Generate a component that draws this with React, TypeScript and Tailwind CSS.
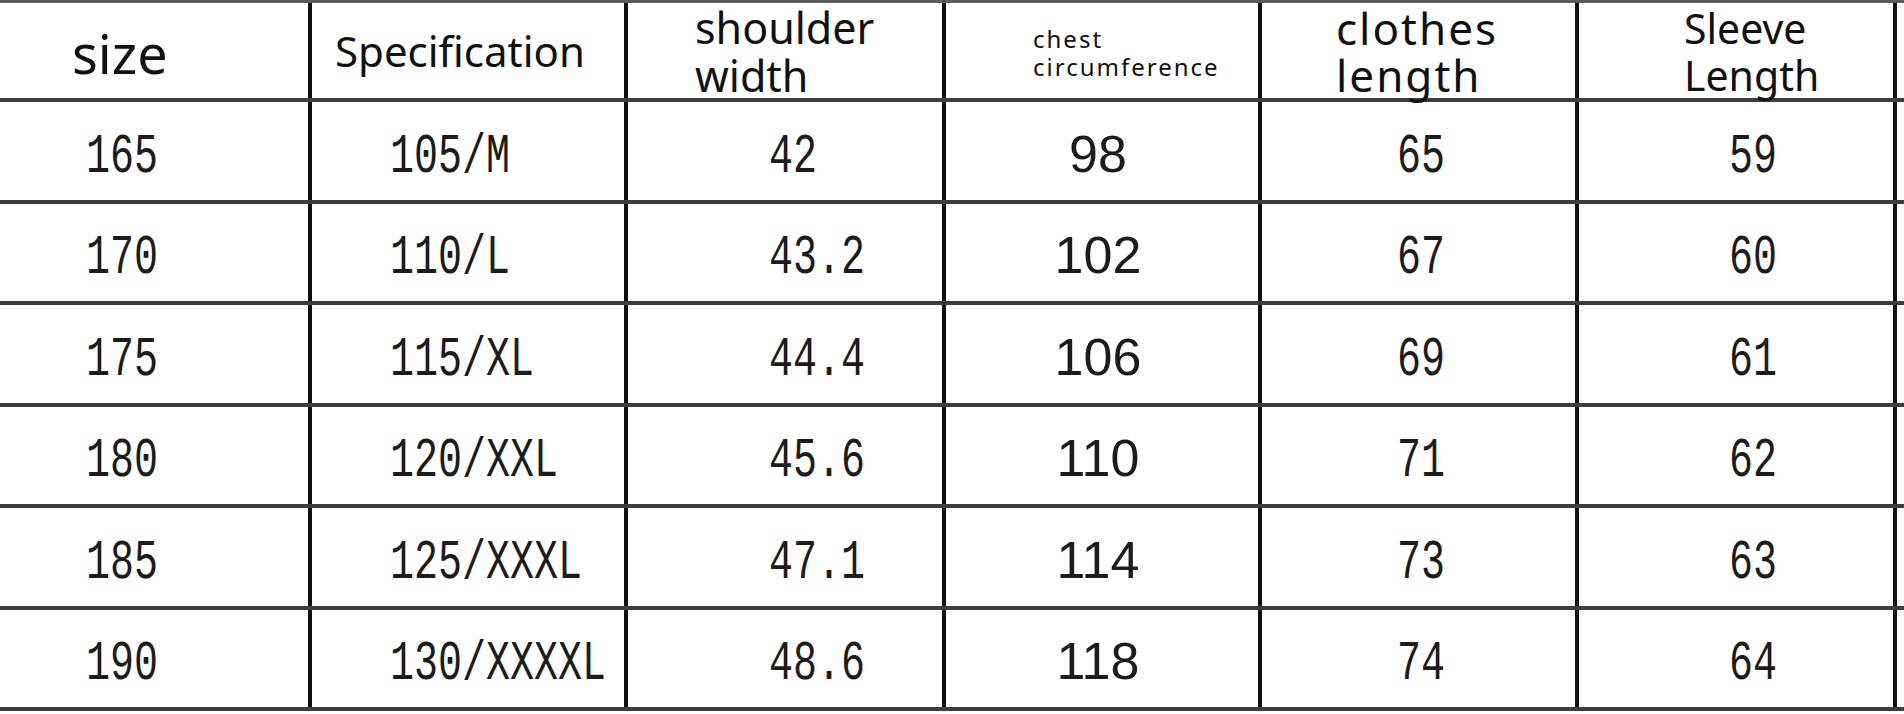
const cols = [
  { w: "w-[312px]", head: "pl-[72px]", cell: "pl-[86px]" },
  { w: "w-[316px]", head: "pl-[23px]", cell: "pl-[78px]" },
  { w: "w-[318px]", head: "pl-[67px]", cell: "pl-[141px]" },
  { w: "w-[316px]", head: "pl-[87px]", cell: "justify-center pr-[8px]" },
  { w: "w-[317px]", head: "pl-[74px]", cell: "pl-[135px]" },
  { w: "w-[318px]", head: "pl-[105px]", cell: "pl-[150px]" },
];

const rows = [
  ["165", "105/M", "42", "98", "65", "59"],
  ["170", "110/L", "43.2", "102", "67", "60"],
  ["175", "115/XL", "44.4", "106", "69", "61"],
  ["180", "120/XXL", "45.6", "110", "71", "62"],
  ["185", "125/XXXL", "47.1", "114", "73", "63"],
  ["190", "130/XXXXL", "48.6", "118", "74", "64"],
];

const sans = "font-['Noto_Sans','DejaVu_Sans',sans-serif]";

function Header() {
  return (
    <div className="flex h-[99px] border-b-4 border-[#3d3d3d] text-[#111]">
      <div className={`${cols[0].w} ${cols[0].head} flex items-center border-r-4 border-[#111]`}>
        <span className={`${sans} text-[54px] leading-none pt-[4px]`}>size</span>
      </div>
      <div className={`${cols[1].w} ${cols[1].head} flex items-center border-r-4 border-[#111]`}>
        <span className={`${sans} text-[42px] leading-none`}>Specification</span>
      </div>
      <div className={`${cols[2].w} ${cols[2].head} flex items-center border-r-4 border-[#111]`}>
        <div className={`${sans} text-[43px] leading-[48px] pt-[2px]`}>
          shoulder
          <br />
          width
        </div>
      </div>
      <div className={`${cols[3].w} ${cols[3].head} flex items-center border-r-4 border-[#111]`}>
        <div className={`${sans} text-[24px] leading-[28px] tracking-[2px] pt-[4px]`}>
          chest
          <br />
          circumference
        </div>
      </div>
      <div className={`${cols[4].w} ${cols[4].head} flex items-center border-r-4 border-[#111]`}>
        <div className={`${sans} text-[44px] leading-[47px] tracking-[2px] pt-[2px]`}>
          clothes
          <br />
          length
        </div>
      </div>
      <div className={`${cols[5].w} ${cols[5].head} flex items-center border-r-4 border-[#111]`}>
        <div className={`${sans} text-[41px] leading-[47px] pt-[2px]`}>
          Sleeve
          <br />
          Length
        </div>
      </div>
    </div>
  );
}

export default function App() {
  return (
    <div className="w-[1904px] h-[714px] bg-white overflow-hidden">
      <div className="border-t-[3px] border-[#5a5a5a]">
        <Header />
        {rows.map((row, r) => (
          <div key={r} className="flex h-[101.5px] border-b-4 border-[#3d3d3d] text-[#1c1c1c]">
            {row.map((value, c) => (
              <div key={c} className={`${cols[c].w} ${cols[c].cell} flex items-center border-r-4 border-[#111]`}>
                {c === 3 ? (
                  <span className="font-['Liberation_Sans',Arial,sans-serif] text-[52px] leading-none mt-[6px]">{value}</span>
                ) : (
                  <span className="font-['Liberation_Mono','Courier_New',monospace] text-[40px] leading-none scale-y-[1.38] inline-block mt-[14px]">
                    {value}
                  </span>
                )}
              </div>
            ))}
          </div>
        ))}
      </div>
    </div>
  );
}
